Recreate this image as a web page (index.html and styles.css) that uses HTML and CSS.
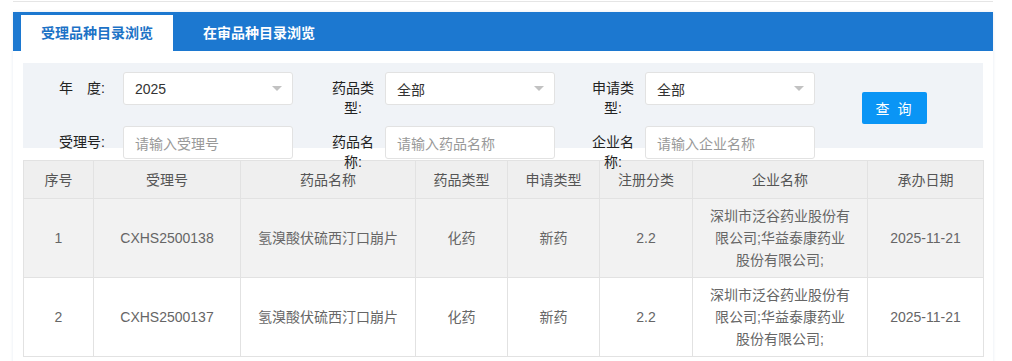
FILE: index.html
```html
<!DOCTYPE html>
<html lang="zh-CN">
<head>
<meta charset="utf-8">
<title>品种目录浏览</title>
<link rel="stylesheet" href="styles.css">
</head>
<body>
<div class="topline"></div>
<div class="container">
  <div class="tabbar">
    <div class="tab active">受理品种目录浏览</div>
    <div class="tab">在审品种目录浏览</div>
  </div>
  <div class="filter">
    <div class="form">
      <div class="label label-first">年　度:</div>
      <div class="select"><span class="val">2025</span><span class="caret"></span></div>
      <div class="label">药品类型:</div>
      <div class="select"><span class="val">全部</span><span class="caret"></span></div>
      <div class="label">申请类型:</div>
      <div class="select"><span class="val">全部</span><span class="caret"></span></div>
      <button class="btn">查 询</button>

      <div class="label label-first">受理号:</div>
      <div class="input"><span class="ph">请输入受理号</span></div>
      <div class="label">药品名称:</div>
      <div class="input"><span class="ph">请输入药品名称</span></div>
      <div class="label">企业名称:</div>
      <div class="input"><span class="ph">请输入企业名称</span></div>
    </div>
  </div>
  <table class="grid">
    <colgroup>
      <col class="c1"><col class="c2"><col class="c3"><col class="c4">
      <col class="c5"><col class="c6"><col class="c7"><col class="c8">
    </colgroup>
    <thead>
      <tr><th>序号</th><th>受理号</th><th>药品名称</th><th>药品类型</th><th>申请类型</th><th>注册分类</th><th>企业名称</th><th>承办日期</th></tr>
    </thead>
    <tbody>
      <tr class="odd">
        <td>1</td><td>CXHS2500138</td><td>氢溴酸伏硫西汀口崩片</td><td>化药</td><td>新药</td><td>2.2</td>
        <td><div class="company">深圳市泛谷药业股份有限公司;华益泰康药业股份有限公司;</div></td>
        <td>2025-11-21</td>
      </tr>
      <tr>
        <td>2</td><td>CXHS2500137</td><td>氢溴酸伏硫西汀口崩片</td><td>化药</td><td>新药</td><td>2.2</td>
        <td><div class="company">深圳市泛谷药业股份有限公司;华益泰康药业股份有限公司;</div></td>
        <td>2025-11-21</td>
      </tr>
    </tbody>
  </table>
</div>
</body>
</html>
```

FILE: styles.css
```css
html, body {
  margin: 0;
  padding: 0;
  background: #fff;
  font-family: "Liberation Sans", "Noto Sans CJK SC", sans-serif;
  font-size: 14px;
  color: #333;
}

.topline {
  margin: 1px 0 0 13px;
  width: 980px;
  height: 1px;
  background: #e5e5e5;
}

.container {
  margin: 10px 0 0 13px;
  width: 980px;
  height: 360px;
  background: #fff;
  box-shadow: 0 0 3px rgba(40, 80, 140, 0.12);
}

.tabbar {
  display: flex;
  align-items: flex-end;
  gap: 10px;
  height: 39px;
  padding-left: 8px;
  background: #1c78d0;
}

.tab {
  height: 36px;
  line-height: 36px;
  padding: 0 20px;
  font-weight: bold;
  font-size: 14px;
  color: #fff;
}

.tab.active {
  background: #fff;
  color: #1c72c6;
}

.filter {
  margin: 12px 10px 0 10px;
  height: 85px;
  box-sizing: border-box;
  padding: 9px 0 0 26px;
  background: #f0f3f7;
}

.form {
  display: grid;
  grid-template-columns: 66px 170px 76px 170px 74px 170px 112px;
  grid-template-rows: 33px 33px;
  column-gap: 8px;
  row-gap: 21px;
}

.label {
  justify-self: end;
  width: 48px;
  padding-top: 6px;
  line-height: 20px;
  text-align: center;
  color: #222;
}

.label-first {
  width: 66px;
}

.select, .input {
  display: flex;
  align-items: center;
  justify-content: space-between;
  box-sizing: border-box;
  height: 33px;
  padding: 0 10px 0 11px;
  background: #fff;
  border: 1px solid #e2e2e2;
  border-radius: 3px;
}

.val {
  color: #333;
}

.ph {
  color: #999;
}

.caret {
  width: 0;
  height: 0;
  border-left: 5.5px solid transparent;
  border-right: 5.5px solid transparent;
  border-top: 5px solid #c2c2c2;
}

.btn {
  grid-column: 7;
  grid-row: 1 / span 2;
  align-self: start;
  justify-self: start;
  margin: 20px 0 0 39px;
  width: 65px;
  height: 32px;
  border: 0;
  border-radius: 2px;
  background: #0a95f5;
  color: #fff;
  font-family: "Liberation Sans", "Noto Sans CJK SC", sans-serif;
  font-size: 14px;
  letter-spacing: 2px;
  padding: 0;
}

.grid {
  margin: 12px 10px 0 10px;
  width: 960px;
  table-layout: fixed;
  border-collapse: collapse;
  font-size: 14px;
  color: #666;
}

.c1 { width: 70px; }
.c2 { width: 147px; }
.c3 { width: 175px; }
.c4 { width: 92px; }
.c5 { width: 92px; }
.c6 { width: 93px; }
.c7 { width: 175px; }
.c8 { width: 116px; }

.grid th, .grid td {
  border: 1px solid #e2e2e2;
  text-align: center;
  padding: 0;
  font-weight: normal;
}

.grid th {
  height: 37px;
  background: #efefef;
  color: #555;
  line-height: 20px;
}

.grid td {
  height: 78px;
  line-height: 22px;
}

.grid tr.odd td {
  background: #f2f2f2;
}

.company {
  width: 142px;
  margin: 0 auto;
}
```
